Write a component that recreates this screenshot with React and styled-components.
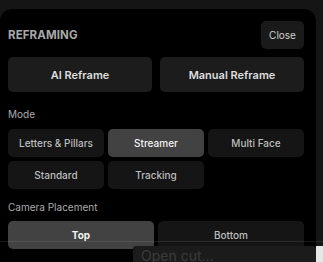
import styled, { createGlobalStyle } from 'styled-components';
import { useState } from 'react';

const GlobalStyle = createGlobalStyle`
    body {
        margin: 0;
        background: #151515;
        font-family: Inter, "Noto Sans", sans-serif;
    }
`

const modes = ['Letters & Pillars', 'Streamer', 'Multi Face', 'Standard', 'Tracking'];
const placements = ['Top', 'Bottom'];

const App = () => {
    const [mode, setMode] = useState('Streamer');
    const [placement, setPlacement] = useState('Top');

    return (
        <Page>
            <GlobalStyle />
            <Panel>
                <Header>
                    <Title>REFRAMING</Title>
                    <CloseButton>Close</CloseButton>
                </Header>
                <ReframeRow>
                    <ReframeButton>AI Reframe</ReframeButton>
                    <ReframeButton>Manual Reframe</ReframeButton>
                </ReframeRow>
                <Label>Mode</Label>
                <ModeGrid>
                    {modes.map(m => (
                        <Option key={m} active={m === mode} onClick={() => setMode(m)}>{m}</Option>
                    ))}
                </ModeGrid>
                <Label spaced>Camera Placement</Label>
                <PlacementRow>
                    {placements.map(p => (
                        <Option key={p} active={p === placement} bold={p === placement} onClick={() => setPlacement(p)}>{p}</Option>
                    ))}
                </PlacementRow>
            </Panel>
            <Divider />
            <OpenCut>Open cut...</OpenCut>
            <Corner />
        </Page>
    )
}

export default App;

const Page = styled.div`
    position: relative;
    width: 323px;
    height: 262px;
    overflow: hidden;
    padding-top: 9px;
    box-sizing: border-box;
`

const Panel = styled.div`
    width: 316px;
    height: 260px;
    box-sizing: border-box;
    background: #000;
    border-radius: 12px 12px 0 0;
    padding: 12px 12px 0 8px;
    display: flex;
    flex-direction: column;
`

const Header = styled.div`
    display: flex;
    align-items: center;
    justify-content: space-between;
    height: 28px;
`

const Title = styled.div`
    font-size: 11.5px;
    font-weight: 700;
    color: #a8a8a8;
    letter-spacing: 0.1px;
`

const CloseButton = styled.button`
    height: 28px;
    width: 43px;
    border: none;
    border-radius: 5px;
    background: #1a1a1a;
    color: #cfcfcf;
    font-family: inherit;
    font-size: 10px;
    padding: 0;
`

const ReframeRow = styled.div`
    display: grid;
    grid-template-columns: 1fr 1fr;
    gap: 8px;
    margin-top: 8px;
`

const ReframeButton = styled.button`
    height: 35px;
    border: none;
    border-radius: 5px;
    background: #1c1c1c;
    color: #dedede;
    font-family: inherit;
    font-size: 11px;
    font-weight: 600;
`

const Label = styled.div`
    margin-top: ${props => props.spaced ? '12px' : '16px'};
    height: 13px;
    line-height: 13px;
    font-size: 10px;
    color: #ababab;
`

const ModeGrid = styled.div`
    display: grid;
    grid-template-columns: repeat(3, 1fr);
    grid-auto-rows: 28px;
    gap: 4px;
    margin-top: 8px;
`

const PlacementRow = styled.div`
    display: grid;
    grid-template-columns: 1fr 1fr;
    gap: 4px;
    height: 28px;
    margin-top: 7px;
`

const Option = styled.button`
    border: none;
    border-radius: 5px;
    background: ${props => props.active ? '#424242' : '#151515'};
    color: ${props => props.active ? '#f2f2f2' : '#bdbdbd'};
    font-family: inherit;
    font-size: 10px;
    font-weight: ${props => props.bold ? 700 : 500};
    padding: 0;
`

const Divider = styled.div`
    position: absolute;
    left: 0;
    right: 0;
    top: 241px;
    height: 1px;
    background: rgba(255, 255, 255, 0.09);
`

const OpenCut = styled.div`
    position: absolute;
    left: 133px;
    top: 246px;
    width: 183px;
    height: 20px;
    background: #1b1b1b;
    border-radius: 3px 3px 0 0;
    color: #3c3c3c;
    font-size: 14px;
    line-height: 20px;
    padding-left: 8px;
    box-sizing: border-box;
`

const Corner = styled.div`
    position: absolute;
    left: 316px;
    top: 246px;
    width: 7px;
    height: 16px;
    background: #e6e6e6;
`
